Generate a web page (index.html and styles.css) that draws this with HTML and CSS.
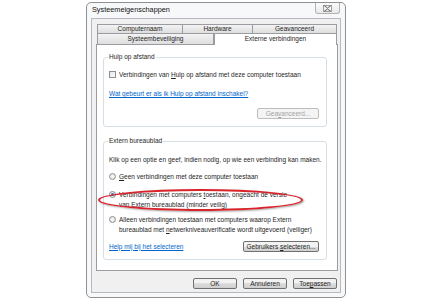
FILE: index.html
```html
<!DOCTYPE html>
<html lang="nl">
<head>
    <meta charset="UTF-8">
    <title>Systeemeigenschappen</title>
    <link rel="stylesheet" href="styles.css">
</head>
<body>
    <div class="window">
        <div class="titlebar">
            <span class="title">Systeemeigenschappen</span>
            <span class="close">
                <svg width="9" height="7" viewBox="0 0 9 7">
                    <path d="M1 0.5 L4.5 3 L8 0.5 M1 6.5 L4.5 4 L8 6.5" stroke="#6a6a6a" stroke-width="1" fill="none"/>
                    <rect x="0.5" y="0.5" width="8" height="6" fill="none" stroke="#8a8a8a" stroke-width="0.8"/>
                </svg>
            </span>
        </div>

        <div class="client">
            <div class="tabrow back">
                <div class="tab tab-computer">Computernaam</div>
                <div class="tab tab-hardware">Hardware</div>
                <div class="tab tab-advanced">Geavanceerd</div>
            </div>
            <div class="tabrow front">
                <div class="tab tab-protect">Systeembeveiliging</div>
                <div class="tab tab-remote active">Externe verbindingen</div>
            </div>

            <div class="pane">
                <fieldset class="group group-assist">
                    <legend>Hulp op afstand</legend>
                    <label class="option">
                        <span class="checkbox"></span>
                        <span>Verbindingen van <u>H</u>ulp op afstand met deze computer toestaan</span>
                    </label>
                    <a class="link assist-link" href="#">Wat gebeurt er als ik Hulp op afstand inschakel?</a>
                    <div class="actions">
                        <button class="btn" disabled>Gea<u>v</u>anceerd...</button>
                    </div>
                </fieldset>

                <fieldset class="group group-remote">
                    <legend>Extern bureaublad</legend>
                    <p class="intro">Klik op een optie en geef, indien nodig, op wie een verbinding kan maken.</p>
                    <label class="option opt-none">
                        <span class="radio"></span>
                        <span><u>G</u>een verbindingen met deze computer toestaan</span>
                    </label>
                    <label class="option opt-any">
                        <span class="radio checked"></span>
                        <span>Verbindingen met computers <u>t</u>oestaan, ongeacht de versie<br>van Extern bureaublad (minder veilig)</span>
                        <span class="highlight"></span>
                    </label>
                    <label class="option opt-nla">
                        <span class="radio"></span>
                        <span>Alleen verbindingen toestaan met computers waarop Extern<br>bureaublad met <u>n</u>etwerkniveauverificatie wordt uitgevoerd (veiliger)</span>
                    </label>
                    <div class="actions split">
                        <a class="link" href="#">Help mij bij het selecteren</a>
                        <button class="btn">Gebruikers <u>s</u>electeren...</button>
                    </div>
                </fieldset>
            </div>

            <div class="footer">
                <button class="btn dialog">OK</button>
                <button class="btn dialog">Annuleren</button>
                <button class="btn dialog">Toe<u>p</u>assen</button>
            </div>
        </div>
    </div>
</body>
</html>
```

FILE: styles.css
```css
body {
    margin: 0;
    padding: 0;
    background-color: #fff;
    font-family: "Liberation Sans", Arial, sans-serif;
    font-size: 6.5px;
    color: #1e1e1e;
}
.window {
    margin: 2px 0 0 86px;
    width: 260px;
    height: 296px;
    box-sizing: border-box;
    border: 1px solid #8f9094;
    border-radius: 5px;
    background-color: #f7f8f9;
    padding: 0 4px 4px 4px;
    display: flex;
    flex-direction: column;
}
.titlebar {
    height: 15px;
    display: flex;
    justify-content: space-between;
    align-items: flex-start;
}
.title {
    font-size: 7.3px;
    line-height: 13px;
    padding-left: 1px;
    color: #111;
}
.close {
    width: 25px;
    height: 11px;
    margin-right: 1px;
    box-sizing: border-box;
    border: 1px solid #b4b4b4;
    border-top: none;
    border-radius: 0 0 3px 3px;
    background: linear-gradient(#fbfbfb, #e9e9e9);
    display: flex;
    justify-content: center;
    align-items: center;
}
.client {
    flex: 1;
    border: 1px solid #b8b9bc;
    background-color: #f0f0f0;
    padding: 5px 2px 0 4px;
    display: flex;
    flex-direction: column;
}
.tabrow {
    display: flex;
    margin: 0 1px;
}
.tab {
    box-sizing: border-box;
    border: 1px solid #9a9ca2;
    border-bottom: none;
    background: linear-gradient(#f3f3f3, #dedede);
    text-align: center;
    white-space: nowrap;
}
.tab + .tab {
    border-left: none;
}
.back .tab {
    height: 9px;
    line-height: 8px;
}
.front .tab {
    height: 11px;
    line-height: 10px;
}
.tab-computer { width: 86px; }
.tab-hardware { width: 70px; }
.tab-advanced { width: 84px; }
.tab-protect { width: 117px; }
.tab-remote { width: 123px; }
.tab.active {
    position: relative;
    z-index: 1;
    height: 12px;
    margin-bottom: -1px;
    background: #fff;
    border-left: 1px solid #9a9ca2;
}
.pane {
    height: 227px;
    box-sizing: border-box;
    border: 1px solid #9a9ca2;
    background-color: #fff;
    padding: 7px 10px 0 6px;
}
.group {
    margin: 0;
    min-width: 0;
    border: 1px solid #d5dfe5;
    border-radius: 3px;
    padding: 0 7px 7px 5px;
}
.group legend {
    padding: 0 1px;
    margin-left: -1px;
    line-height: 10px;
}
.group-remote {
    margin-top: 9px;
}
.option {
    display: flex;
    align-items: flex-start;
    gap: 3px;
    line-height: 10px;
    white-space: nowrap;
    position: relative;
}
.checkbox {
    width: 7px;
    height: 7px;
    margin-top: 1px;
    flex: none;
    box-sizing: border-box;
    border: 1px solid #8e8f8f;
    background: linear-gradient(135deg, #e6e6e6, #fbfbfb);
}
.radio {
    width: 7px;
    height: 7px;
    margin-top: 1px;
    flex: none;
    box-sizing: border-box;
    border: 1px solid #8e8f8f;
    border-radius: 50%;
    background: radial-gradient(circle, #fbfbfb, #dcdcdc);
    display: flex;
    justify-content: center;
    align-items: center;
}
.radio.checked::after {
    content: "";
    width: 3px;
    height: 3px;
    border-radius: 50%;
    background-color: #2f6fbf;
}
.group-assist .option {
    margin-top: 8px;
}
.link {
    color: #0066cc;
    text-decoration: underline;
    line-height: 10px;
    white-space: nowrap;
}
.assist-link {
    display: block;
    margin-top: 9px;
}
.actions {
    display: flex;
    justify-content: flex-end;
    align-items: center;
    margin-top: 9px;
}
.actions.split {
    justify-content: space-between;
    margin-top: 6px;
}
.btn {
    font-family: inherit;
    font-size: 6.5px;
    color: #1e1e1e;
    height: 11px;
    padding: 0 2px;
    box-sizing: border-box;
    border: 1px solid #707070;
    border-radius: 2px;
    background: linear-gradient(#f2f2f2 50%, #dddddd 50%, #cfcfcf);
    line-height: 9px;
    white-space: nowrap;
}
.group-assist .btn {
    width: 62px;
}
.btn:disabled {
    color: #a3a3a3;
    border-color: #bdbdbd;
    background: #f4f4f4;
}
.group-remote .btn {
    width: 76px;
}
.intro {
    margin: 9px 0 0 0;
    line-height: 10px;
    white-space: nowrap;
}
.opt-none {
    margin-top: 7px;
}
.opt-any {
    margin-top: 8px;
}
.opt-nla {
    margin-top: 5px;
}
.highlight {
    position: absolute;
    left: -11px;
    top: -1px;
    width: 205px;
    height: 22px;
    box-sizing: border-box;
    border: 2px solid #d8232a;
    border-radius: 50%;
    box-shadow: 1px 1px 2px rgba(0, 0, 0, 0.35);
}
.footer {
    display: flex;
    justify-content: flex-end;
    gap: 6px;
    margin-top: 7px;
    padding-right: 1px;
}
.btn.dialog {
    width: 44px;
}
```
